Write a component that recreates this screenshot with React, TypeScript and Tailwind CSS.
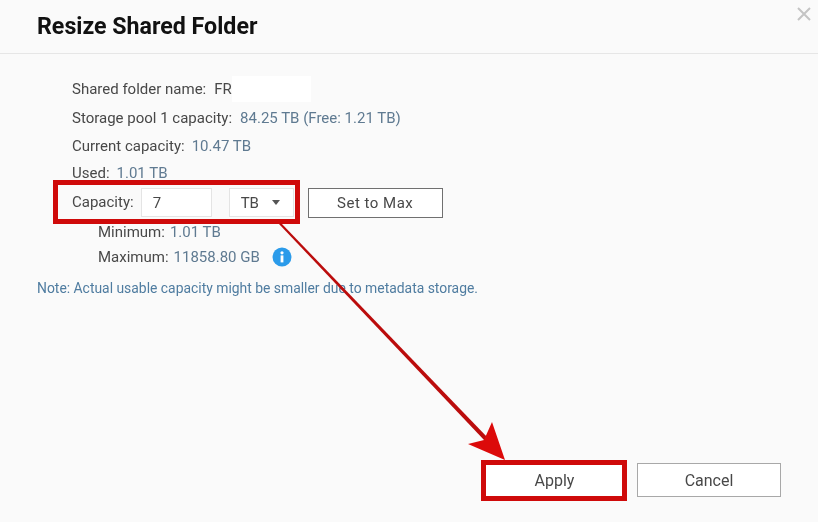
export default function App() {
  const label = "text-[#484848]";
  const val = "text-[#5f7a91]";
  return (
    <div className="relative w-[818px] h-[522px] overflow-hidden bg-[#fafafa] font-['Roboto',sans-serif] text-[15px] leading-[20px]">
      <header className="h-[54px] border-b border-[#e6e6e6] pl-[37px] pr-[7px] flex items-center justify-between blur-[0.6px]">
        <h1 className="text-[23.2px] font-bold text-[#111] pb-[1px]">Resize Shared Folder</h1>
        <svg width="14" height="14" viewBox="0 0 14 14" className="mb-[26px]">
          <path d="M1 1L13 13M13 1L1 13" stroke="#c4c4c4" strokeWidth="2" />
        </svg>
      </header>
      <main className="pl-[37px] flex flex-col blur-[0.6px]">
        <div className="pl-[35px] flex flex-col">
          <div className="mt-[21px] h-[28px] flex items-center">
            <span className={label}>Shared folder name:</span>
            <span className={`${label} ml-[8px]`}>FR</span>
            <span className="w-[79px] h-[26px] bg-white" />
          </div>
          <div className="h-[29px] flex items-center gap-[8px]">
            <span className={label}>Storage pool 1 capacity:</span>
            <span className={val}>84.25 TB (Free: 1.21 TB)</span>
          </div>
          <div className="h-[27px] flex items-center gap-[7px]">
            <span className={label}>Current capacity:</span>
            <span className={val}>10.47 TB</span>
          </div>
          <div className="h-[27px] flex items-center gap-[7px]">
            <span className={label}>Used:</span>
            <span className={val}>1.01 TB</span>
          </div>
          <div className="h-[31px] flex items-center">
            <span className={label}>Capacity:</span>
            <div className="self-end ml-[7px] w-[71px] h-[29px] bg-white border border-[#e4e4e4] pl-[11px] flex items-center text-[#484848]">7</div>
            <div className="self-end ml-[17px] w-[65px] h-[29px] bg-white border border-[#e4e4e4] pl-[11px] flex items-center gap-[13px] text-[#484848]">
              TB
              <svg width="8" height="6" viewBox="0 0 8 6"><path d="M0 0H8L4 5Z" fill="#555" /></svg>
            </div>
            <button className="self-start mt-[2px] ml-[14px] w-[135px] h-[30px] bg-white border border-[#707070] text-[#484848] text-[15px] tracking-[0.5px]">Set to Max</button>
          </div>
          <div className="pl-[26px] mt-[2px] h-[25px] flex items-center gap-[5px]">
            <span className={label}>Minimum:</span>
            <span className={val}>1.01 TB</span>
          </div>
          <div className="pl-[26px] h-[25px] flex items-center gap-[5px]">
            <span className={label}>Maximum:</span>
            <span className={val}>11858.80 GB</span>
            <svg width="20" height="20" viewBox="0 0 20 20" className="ml-[7px]">
              <circle cx="10" cy="10" r="9.5" fill="#2b9bea" />
              <rect x="8.6" y="8.4" width="2.8" height="7" fill="#fff" />
              <circle cx="10" cy="5.8" r="1.6" fill="#fff" />
            </svg>
          </div>
        </div>
        <p className="mt-[9px] text-[13.9px] text-[#4f7ca0]">Note: Actual usable capacity might be smaller due to metadata storage.</p>
      </main>
      <footer className="absolute right-[37px] bottom-[25px] flex gap-[11px] text-[16px] blur-[0.4px]">
        <button className="w-[143px] h-[34px] pt-[1px] bg-white text-[#484848]">Apply</button>
        <button className="w-[144px] h-[34px] pt-[1px] bg-white border border-[#a8a8a8] text-[#484848]">Cancel</button>
      </footer>
      <svg className="absolute left-0 top-0 pointer-events-none" width="818" height="522" viewBox="0 0 818 522">
        <rect x="55.5" y="182.5" width="242" height="39" fill="none" stroke="#cf0a0a" strokeWidth="5" />
        <rect x="483.5" y="462.5" width="141" height="36" fill="none" stroke="#cf0a0a" strokeWidth="5" />
        <path d="M279 224L281 223L488 438L485 441Z" fill="#bb0c0c" />
        <path d="M505 460L468 444L484 440L492 422Z" fill="#dc0a0a" />
      </svg>
    </div>
  );
}
